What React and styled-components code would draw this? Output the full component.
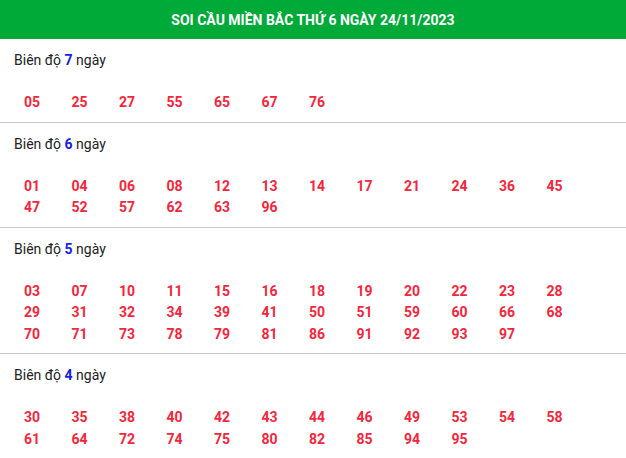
import React from "react";
import styled, { createGlobalStyle } from "styled-components";

const GlobalStyle = createGlobalStyle`
    body {
        margin: 0;
        background: #fff;
        font-family: Roboto, "Liberation Sans", Arial, sans-serif;
    }
`;

// dữ liệu biên độ theo số ngày
const DATA = [
    { days: 7, nums: ["05", "25", "27", "55", "65", "67", "76"] },
    {
        days: 6,
        nums: ["01", "04", "06", "08", "12", "13", "14", "17", "21", "24", "36", "45",
            "47", "52", "57", "62", "63", "96"],
    },
    {
        days: 5,
        nums: ["03", "07", "10", "11", "15", "16", "18", "19", "20", "22", "23", "28",
            "29", "31", "32", "34", "39", "41", "50", "51", "59", "60", "66", "68",
            "70", "71", "73", "78", "79", "81", "86", "91", "92", "93", "97"],
    },
    {
        days: 4,
        nums: ["30", "35", "38", "40", "42", "43", "44", "46", "49", "53", "54", "58",
            "61", "64", "72", "74", "75", "80", "82", "85", "94", "95"],
    },
];

const App = () => {
    return (
        <Wrap>
            <GlobalStyle />
            <Header>SOI CẦU MIỀN BẮC THỨ 6 NGÀY 24/11/2023</Header>
            {DATA.map((item) => (
                <Section key={item.days}>
                    <Label>
                        Biên độ <Days>{item.days}</Days> ngày
                    </Label>
                    <NumGrid>
                        {item.nums.map((n) => (
                            <Num key={n}>{n}</Num>
                        ))}
                    </NumGrid>
                </Section>
            ))}
        </Wrap>
    );
};

const Wrap = styled.div`
    width: 626px;
    background: #fff;
`;

const Header = styled.div`
    height: 39px;
    display: flex;
    align-items: center;
    justify-content: center;
    background: #00aa39;
    color: #fff;
    font-size: 14px;
    font-weight: 700;
`;

const Section = styled.div`
    padding: 11px 0 8px;
    border-bottom: 1px solid #c8c8c8;
`;

const Label = styled.div`
    padding-left: 14px;
    font-size: 14px;
    line-height: 21px;
    color: #222;
    margin-bottom: 21px;
`;

const Days = styled.b`
    color: #1420e6;
`;

const NumGrid = styled.div`
    display: grid;
    grid-template-columns: repeat(12, 47.5px);
    grid-auto-rows: 21.5px;
    padding-left: 24px;
`;

const Num = styled.span`
    font-size: 14px;
    line-height: 21.5px;
    font-weight: 700;
    color: #f5263b;
`;

export default App;
